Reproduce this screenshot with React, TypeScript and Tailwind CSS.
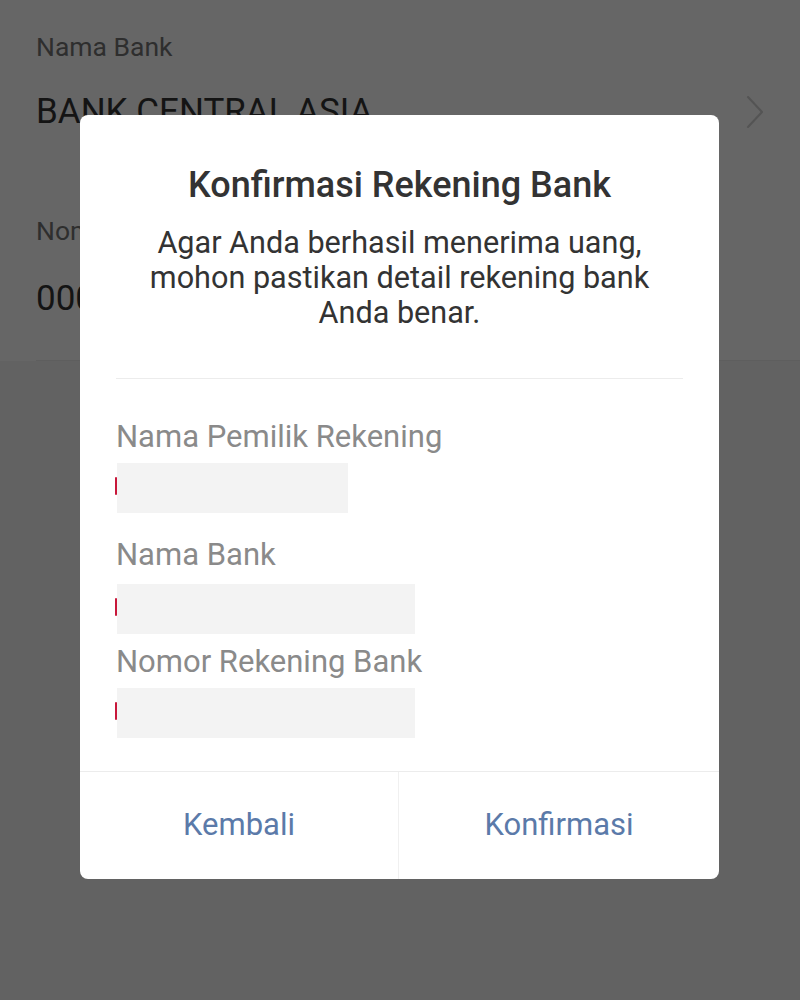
import React from "react";

const font = { fontFamily: "Roboto, 'Noto Sans', Arial, sans-serif" };

function Chevron() {
  return (
    <svg width="20" height="34" viewBox="0 0 20 34" fill="none" className="shrink-0">
      <path d="M3 2 L17 17 L3 32" stroke="#545454" strokeWidth="2" strokeLinecap="round" strokeLinejoin="round" />
    </svg>
  );
}

function Field({ label, boxW, mt, boxMt }: { label: string; boxW: string; mt: string; boxMt: string }) {
  return (
    <div className={mt}>
      <div className="text-[31px] leading-[36px] text-[#8a8a8a]">{label}</div>
      <div className={`${boxMt} relative ml-px h-[50px] ${boxW} bg-[#f3f3f3]`}>
        {/* edge of the masked value peeking out */}
        <span className="absolute left-[-2px] top-[14px] h-[18px] w-[2px] rounded-full bg-[#c8173a]" />
      </div>
    </div>
  );
}

export default function App() {
  return (
    <div className="relative h-[1000px] w-full overflow-hidden bg-[#626262]" style={font}>
      {/* dimmed form underneath */}
      <div className="bg-[#666666] pl-9 pt-[30px]">
        <div className="text-[26.5px] leading-[34px] text-[#2e2e2e]">Nama Bank</div>
        <div className="mt-[28px] flex items-center justify-between pr-[35px]">
          <div className="text-[35px] leading-[40px] text-[#141414]">BANK CENTRAL ASIA</div>
          <Chevron />
        </div>
        <div className="mt-[82px] text-[26.5px] leading-[34px] text-[#2e2e2e]">Nomor Rekening Bank</div>
        <div className="mt-[31px] pb-[41px] text-[35px] leading-[40px] text-[#141414]">0001234567</div>
        <div className="h-px bg-[#5e5e5e]" />
      </div>

      {/* confirmation dialog */}
      <div className="absolute left-[80px] top-[115px] flex h-[764px] w-[639px] flex-col overflow-hidden rounded-[8px] bg-white">
        <div className="px-9 pt-[50px]">
          <div className="text-center text-[36px] font-medium leading-[40px] text-[#333333]">
            Konfirmasi Rekening Bank
          </div>
          <div className="mt-[20px] text-center text-[30.6px] leading-[35px] text-[#333333]">
            Agar Anda berhasil menerima uang,
            <br />
            mohon pastikan detail rekening bank
            <br />
            Anda benar.
          </div>
          <div className="mt-[48px] h-px bg-[#ececec]" />
          <Field label="Nama Pemilik Rekening" boxW="w-[231px]" mt="mt-[40px]" boxMt="mt-[8px]" />
          <Field label="Nama Bank" boxW="w-[298px]" mt="mt-[24px]" boxMt="mt-[11px]" />
          <Field label="Nomor Rekening Bank" boxW="w-[298px]" mt="mt-[10px]" boxMt="mt-[8px]" />
        </div>
        <div className="mt-auto flex h-[108px] border-t border-[#ececec]">
          <button className="flex w-[319px] items-center justify-center border-r border-[#f0f0f0] text-[31px] text-[#5b7aa9]">
            Kembali
          </button>
          <button className="flex flex-1 items-center justify-center text-[31px] text-[#5b7aa9]">
            Konfirmasi
          </button>
        </div>
      </div>
    </div>
  );
}
